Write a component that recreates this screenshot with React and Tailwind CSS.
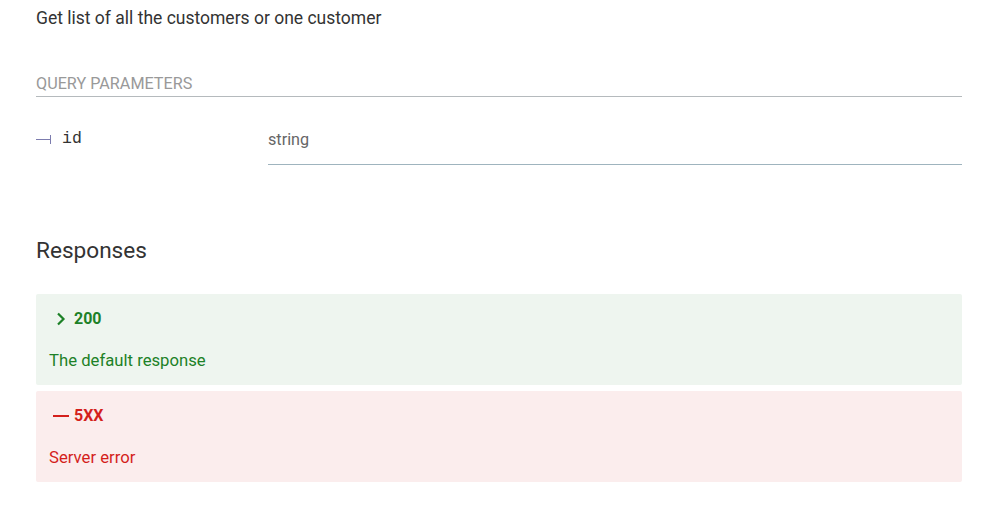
import React from 'react'

const responses = [
  {
    code: '200',
    text: 'The default response',
    box: 'bg-[#eef5ef]',
    color: 'text-[#1d8127]',
    expandable: true,
  },
  {
    code: '5XX',
    text: 'Server error',
    box: 'bg-[#fbeded]',
    color: 'text-[#d41f1c]',
    expandable: false,
  },
]

const Chevron = () => (
  <svg width="10" height="14" viewBox="0 0 10 14" className="shrink-0">
    <path d="M2 1.5 L7.5 7 L2 12.5" fill="none" stroke="currentColor" strokeWidth="2.2" />
  </svg>
)

export default function App() {
  return (
    <div className="bg-white min-h-[526px] pl-[36px] pr-[43px] pt-[6px] font-['Roboto',sans-serif] text-[#333]">
      <p className="text-[17.5px] leading-[24px]">Get list of all the customers or one customer</p>

      {/* Query params */}
      <h5 className="mt-[44px] text-[16.2px] leading-[20px] uppercase text-[#999] border-b border-[#b5babd] pb-[2px]">
        Query parameters
      </h5>
      <div className="flex mt-[27px]">
        <div className="w-[232px] flex items-center self-start pt-[5px]">
          <svg width="15" height="10" viewBox="0 0 15 10" className="text-[#7c7cae] mr-[11px]">
            <path d="M0 5.5 H14" stroke="currentColor" strokeWidth="1" />
            <path d="M14.5 1 V10" stroke="currentColor" strokeWidth="1" />
          </svg>
          <span className="font-['Liberation_Mono',monospace] text-[16.5px] leading-[20px] text-[#333]">id</span>
        </div>
        <div className="flex-1 border-b border-[#9fb4be] pt-[4px] pb-[12px]">
          <span className="text-[16.2px] leading-[20px] text-[#666]">string</span>
        </div>
      </div>

      {/* Responses */}
      <h3 className="mt-[72px] text-[22.6px] leading-[28px] text-[#333]">Responses</h3>
      <div className="mt-[29px] flex flex-col gap-[6px]">
        {responses.map((r) => (
          <div key={r.code} className={`${r.box} ${r.color} rounded-[2px] h-[91px] px-[13px] pt-[14px]`}>
            <div className="flex items-center gap-[8px] h-[22px] font-bold text-[16px]">
              {r.expandable ? (
                <span className="ml-[7px] flex"><Chevron /></span>
              ) : (
                <span className="ml-[4px] w-[16px] h-[2px] bg-current mr-[-3px]" />
              )}
              <span>{r.code}</span>
            </div>
            <p className="mt-[21px] text-[16.7px] leading-[20px]">{r.text}</p>
          </div>
        ))}
      </div>
    </div>
  )
}
